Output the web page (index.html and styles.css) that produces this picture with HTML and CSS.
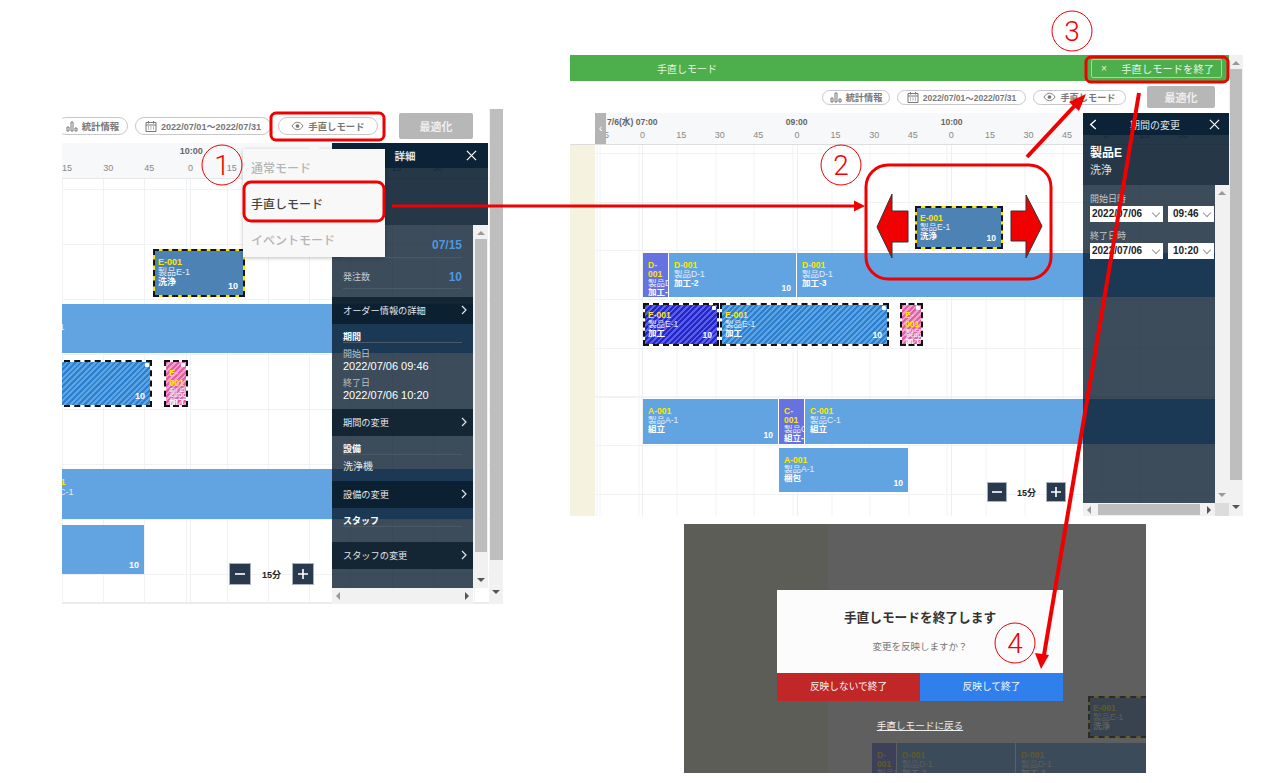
FILE: index.html
```html
<!DOCTYPE html>
<html lang="ja">
  <head>
    <meta charset="UTF-8" />
    <meta name="viewport" content="width=device-width, initial-scale=1.0" />
    <title>手直しモード</title>
    <link rel="stylesheet" href="styles.css">
  </head>
  <body>
    <svg class="sprite" aria-hidden="true">
      <symbol id="i-stats" viewBox="0 0 12 12"><path d="M1 7h2v4H1zM5 2h2v9H5zM9 8h2v3H9z" fill="none" stroke="currentColor" /></symbol>
      <symbol id="i-cal" viewBox="0 0 12 12"><path d="M1 2.5h10v9H1zM1 5h10M3.5 1v2.500M8.500 1v2.500M3 7h1M5.500 7h1M8 7h1M3 9h1M5.500 9h1M8 9h1" fill="none" stroke="currentColor" /></symbol>
      <symbol id="i-eye" viewBox="0 0 14 10"><path d="M1 5c2-3 4-4 6-4s4 1 6 4c-2 3-4 4-6 4S3 8 1 5z" fill="none" stroke="currentColor" /><circle cx="7" cy="5" r="2" fill="currentColor" /></symbol>
      <symbol id="i-close" viewBox="0 0 12 12"><path d="M1 1l10 10M11 1L1 11" fill="none" stroke="currentColor" stroke-width="1.300" /></symbol>
      <symbol id="i-next" viewBox="0 0 6 10"><path d="M1 1l4 4-4 4" fill="none" stroke="currentColor" stroke-width="1.200" /></symbol>
      <symbol id="i-back" viewBox="0 0 8 12"><path d="M7 1L1.500 6 7 11" fill="none" stroke="currentColor" stroke-width="1.500" /></symbol>
      <symbol id="i-minus" viewBox="0 0 12 12"><path d="M1 6h10" fill="none" stroke="currentColor" stroke-width="1.600" /></symbol>
      <symbol id="i-plus" viewBox="0 0 12 12"><path d="M1 6h10M6 1v10" fill="none" stroke="currentColor" stroke-width="1.600" /></symbol>
    </svg>

    <div class="slide">
      <!-- left shot: choosing the mode -->
      <section class="shot shot-a">
        <div class="shot-main">
          <div class="toolbar">
            <span class="pill pill-stat"><svg class="icon"><use href="#i-stats" /></svg>統計情報</span>
            <span class="pill pill-date"><svg class="icon"><use href="#i-cal" /></svg>2022/07/01～2022/07/31</span>
            <span class="pill pill-mode"><svg class="icon icon-eye"><use href="#i-eye" /></svg>手直しモード</span>
            <span class="optimize">最適化</span>
          </div>
          <div class="chart">
            <div class="chart-head">
              <div class="hours"><span>10:00</span></div>
              <div class="ticks">
                <span>15</span><span>30</span><span>45</span><span>0</span><span>15</span><span>30</span><span>45</span><span>0</span><span>15</span><span>30</span>
              </div>
            </div>
            <div class="chart-body">
              <div class="hour-line" style="left:128px"></div>
              <div class="bar bar-moved" style="left:91px;top:70px;width:92px;height:48px">
                <b class="code">E-001</b><span class="name">製品E-1</span><b class="proc">洗浄</b><b class="qty">10</b>
              </div>
              <div class="bar" style="left:-35px;top:125px;width:446px;height:49px">
                <b class="code">D-001</b><span class="name">製品D-1</span>
              </div>
              <div class="bar bar-hatch" style="left:-80px;top:181px;width:170px;height:47px"><b class="qty">10</b></div>
              <div class="bar bar-hatch bar-pink" style="left:102px;top:181px;width:24px;height:47px">
                <b class="code">E-001</b><span class="name">製品</span><b class="proc">加工</b>
              </div>
              <div class="bar" style="left:-26px;top:290px;width:437px;height:50px">
                <b class="code">C-001</b><span class="name">製品C-1</span>
              </div>
              <div class="bar" style="left:-80px;top:346px;width:162px;height:49px"><b class="qty">10</b></div>
            </div>
            <div class="zoomer">
              <span class="zoom-btn"><svg class="icon"><use href="#i-minus" /></svg></span>
              <b class="zoom-label">15分</b>
              <span class="zoom-btn"><svg class="icon"><use href="#i-plus" /></svg></span>
            </div>
            <aside class="panel">
              <div class="panel-head"><span></span><span class="panel-title">詳細</span><svg class="panel-x"><use href="#i-close" /></svg></div>
              <div class="summary"></div>
              <div class="panel-body">
                <div class="panel-content">
                  <div class="info info-first"><span>納期</span><b>07/15</b></div>
                  <div class="info"><span>発注数</span><b>10</b></div>
                  <div class="nav-row">オーダー情報の詳細<svg class="nav-arrow"><use href="#i-next" /></svg></div>
                  <h3 class="group">期間</h3>
                  <p class="label">開始日</p>
                  <p class="value">2022/07/06 09:46</p>
                  <p class="label label-next">終了日</p>
                  <p class="value">2022/07/06 10:20</p>
                  <div class="nav-row nav-row-spaced">期間の変更<svg class="nav-arrow"><use href="#i-next" /></svg></div>
                  <h3 class="group">設備</h3>
                  <p class="plain">洗浄機</p>
                  <div class="nav-row">設備の変更<svg class="nav-arrow"><use href="#i-next" /></svg></div>
                  <h3 class="group">スタッフ</h3>
                  <div class="blank"></div>
                  <div class="nav-row">スタッフの変更<svg class="nav-arrow"><use href="#i-next" /></svg></div>
                </div>
                <div class="inner-scroll">
                  <i class="tri tri-up"></i><i class="inner-thumb"></i><i class="tri tri-down"></i>
                </div>
              </div>
              <div class="hscroll"><i class="tri tri-left"></i><i class="tri tri-right"></i></div>
            </aside>
          </div>
        </div>
        <div class="outer-scroll"><i class="outer-thumb"></i><i class="tri tri-down"></i></div>

        <div class="mode-menu">
          <span class="mode-item">通常モード</span>
          <span class="mode-item mode-active">手直しモード</span>
          <span class="mode-item">イベントモード</span>
        </div>
      </section>

      <!-- right shot: repair mode is on -->
      <section class="shot shot-b">
        <div class="shot-main">
          <header class="mode-bar">
            <span class="mode-bar-title">手直しモード</span>
            <span class="exit-btn"><span>×</span><span>手直しモードを終了</span></span>
          </header>
          <div class="toolbar">
            <span class="pill pill-stat"><svg class="icon"><use href="#i-stats" /></svg>統計情報</span>
            <span class="pill pill-date"><svg class="icon"><use href="#i-cal" /></svg>2022/07/01～2022/07/31</span>
            <span class="pill pill-mode"><svg class="icon icon-eye"><use href="#i-eye" /></svg>手直しモード</span>
            <span class="optimize">最適化</span>
          </div>
          <div class="chart">
            <div class="chart-head">
              <span class="collapse">‹</span>
              <div class="hours"><span>7/6(水) 07:00</span><span>09:00</span><span>10:00</span></div>
              <div class="ticks">
                <span>45</span><span>0</span><span>15</span><span>30</span><span>45</span><span>0</span><span>15</span><span>30</span><span>45</span><span>0</span><span>15</span><span>30</span><span>45</span><span>0</span><span>15</span><span>30</span>
              </div>
            </div>
            <div class="chart-body">
              <div class="hour-line" style="left:72px"></div>
              <div class="hour-line" style="left:227px"></div>
              <div class="hour-line" style="left:381px"></div>
              <div class="bar bar-moved" style="left:345px;top:61px;width:88px;height:43px">
                <b class="code">E-001</b><span class="name">製品E-1</span><b class="proc">洗浄</b><b class="qty">10</b>
              </div>
              <div class="bar bar-violet" style="left:73px;top:108px;width:25px;height:44px">
                <b class="code">D-001</b><span class="name">製品D-1</span><b class="proc">加工-1</b>
              </div>
              <div class="bar" style="left:99px;top:108px;width:127px;height:44px">
                <b class="code">D-001</b><span class="name">製品D-1</span><b class="proc">加工-2</b><b class="qty">10</b>
              </div>
              <div class="bar" style="left:227px;top:108px;width:418px;height:44px">
                <b class="code">D-001</b><span class="name">製品D-1</span><b class="proc">加工-3</b>
              </div>
              <div class="bar bar-hatch bar-navy" style="left:73px;top:158px;width:76px;height:43px">
                <b class="code">E-001</b><span class="name">製品E-1</span><b class="proc">加工</b><b class="qty">10</b>
              </div>
              <div class="bar bar-hatch" style="left:150px;top:158px;width:169px;height:43px">
                <b class="code">E-001</b><span class="name">製品E-1</span><b class="proc">加工</b><b class="qty">10</b>
              </div>
              <div class="bar bar-hatch bar-pink" style="left:330px;top:158px;width:23px;height:43px">
                <b class="code">E-001</b><span class="name">製品E-1</span><b class="proc">加工</b>
              </div>
              <div class="bar" style="left:73px;top:254px;width:135px;height:45px">
                <b class="code">A-001</b><span class="name">製品A-1</span><b class="proc">組立</b><b class="qty">10</b>
              </div>
              <div class="bar bar-violet" style="left:209px;top:254px;width:25px;height:45px">
                <b class="code">C-001</b><span class="name">製品C-1</span><b class="proc">組立-1</b>
              </div>
              <div class="bar" style="left:235px;top:254px;width:410px;height:45px">
                <b class="code">C-001</b><span class="name">製品C-1</span><b class="proc">組立</b>
              </div>
              <div class="bar" style="left:209px;top:303px;width:129px;height:44px">
                <b class="code">A-001</b><span class="name">製品A-1</span><b class="proc">梱包</b><b class="qty">10</b>
              </div>
            </div>
            <div class="zoomer">
              <span class="zoom-btn"><svg class="icon"><use href="#i-minus" /></svg></span>
              <b class="zoom-label">15分</b>
              <span class="zoom-btn"><svg class="icon"><use href="#i-plus" /></svg></span>
            </div>
            <aside class="panel">
              <div class="panel-head">
                <svg class="panel-back"><use href="#i-back" /></svg>
                <span class="panel-title">期間の変更</span>
                <svg class="panel-x"><use href="#i-close" /></svg>
              </div>
              <div class="summary">
                <b class="summary-name">製品E</b>
                <span class="summary-proc">洗浄</span>
              </div>
              <div class="panel-body">
                <div class="panel-content">
                  <p class="field-label">開始日時</p>
                  <div class="field-row">
                    <span class="pick pick-date">2022/07/06</span>
                    <span class="pick pick-time">09:46</span>
                  </div>
                  <p class="field-label">終了日時</p>
                  <div class="field-row">
                    <span class="pick pick-date">2022/07/06</span>
                    <span class="pick pick-time">10:20</span>
                  </div>
                </div>
                <div class="inner-scroll">
                  <i class="tri tri-up"></i><i class="tri tri-down"></i>
                </div>
              </div>
              <div class="hscroll"><i class="tri tri-left"></i><i class="hscroll-thumb"></i><i class="tri tri-right"></i></div>
            </aside>
          </div>
        </div>
        <div class="outer-scroll"><i class="tri tri-up"></i><i class="outer-thumb"></i><i class="tri tri-down"></i></div>
      </section>

      <!-- bottom shot: exit dialog -->
      <section class="shot shot-c">
        <div class="chart-body">
          <div class="bar bar-moved" style="left:404px;top:172px;width:80px;height:42px">
            <b class="code">E-001</b><span class="name">製品E-1</span><b class="proc">洗浄</b>
          </div>
          <div class="bar bar-violet" style="left:188px;top:219px;width:24px;height:44px">
            <b class="code">D-001</b><span class="name">製品D-1</span>
          </div>
          <div class="bar" style="left:213px;top:219px;width:118px;height:44px">
            <b class="code">D-001</b><span class="name">製品D-1</span><b class="proc">加工-2</b><b class="qty">10</b>
          </div>
          <div class="bar" style="left:332px;top:219px;width:140px;height:44px">
            <b class="code">D-001</b><span class="name">製品D-1</span><b class="proc">加工-3</b>
          </div>
        </div>
        <div class="overlay">
          <div class="dialog">
            <div class="dialog-text">
              <h2>手直しモードを終了します</h2>
              <p>変更を反映しますか？</p>
            </div>
            <div class="dialog-actions">
              <span class="btn-discard">反映しないで終了</span>
              <span class="btn-apply">反映して終了</span>
            </div>
          </div>
          <span class="back-link">手直しモードに戻る</span>
        </div>
      </section>

      <!-- callouts drawn on top of the shots -->
      <svg class="marks" viewBox="0 0 1288 783">
        <rect class="frame" x="271" y="113" width="113" height="27" rx="5" />
        <rect class="frame" x="244" y="182" width="140" height="39" rx="7" />
        <rect class="frame" x="1086" y="57" width="142" height="25" rx="5" />
        <rect class="frame" x="866" y="165" width="185" height="114" rx="22" />

        <line class="shaft" x1="392" y1="206" x2="856" y2="206" />
        <polygon class="head" points="865,206 854,200.500 854,211.500" />
        <line class="shaft-thick" x1="1027" y1="157" x2="1080" y2="100" />
        <polygon class="head" points="1086,94 1069,102 1079,111" />
        <line class="shaft-thick" x1="1139" y1="93" x2="1044" y2="655" />
        <polygon class="head" points="1041,669 1035,653 1049,655" />

        <polygon class="block" points="877,227 892,194 892,211 908,211 908,242 892,242 892,258" />
        <polygon class="block" points="1042,226 1026,195 1026,211 1011,211 1011,241 1026,241 1026,258" />

        <circle class="ring" cx="222" cy="165" r="20" />
        <text class="num" x="222" y="175">1</text>
        <circle class="ring" cx="841" cy="165" r="20" />
        <text class="num" x="841" y="175">2</text>
        <circle class="ring" cx="1072" cy="31" r="20" />
        <text class="num" x="1072" y="41">3</text>
        <circle class="ring" cx="1015" cy="643" r="20" />
        <text class="num" x="1015" y="653">4</text>
      </svg>
    </div>
  </body>
</html>
```

FILE: styles.css
```css
* {
  box-sizing: border-box;
}
html,
body {
  margin: 0;
  padding: 0;
  background-color: #ffffff;
}
body {
  font-family: "Liberation Sans", "Noto Sans CJK JP", sans-serif;
  color: #333333;
}
p,
h2,
h3 {
  margin: 0;
}
.sprite {
  display: none;
}
.slide {
  position: relative;
  width: 1288px;
  height: 783px;
  overflow: hidden;
}
.shot {
  position: absolute;
  display: flex;
  overflow: hidden;
  background-color: #ffffff;
}
.shot-a {
  left: 62px;
  top: 109px;
  width: 441px;
  height: 495px;
  --cw: 41.2px;
  --rh: 55px;
}
.shot-b {
  left: 570px;
  top: 55px;
  width: 673px;
  height: 461px;
  --cw: 38.6px;
  --rh: 48.7px;
}
.shot-c {
  left: 684px;
  top: 524px;
  width: 462px;
  height: 249px;
  --cw: 38.6px;
  --rh: 48.7px;
}
.shot-main {
  flex: 1;
  min-width: 0;
  display: flex;
  flex-direction: column;
}

/* toolbar */
.toolbar {
  flex: none;
  display: flex;
  justify-content: flex-end;
  align-items: center;
  gap: 7px;
  height: 34px;
  padding-right: 16px;
}
.shot-b .toolbar {
  height: 32px;
  padding-right: 14px;
}
.pill {
  flex: none;
  display: flex;
  align-items: center;
  justify-content: center;
  gap: 4px;
  height: 18px;
  border: 1px solid #c8c8c8;
  border-radius: 9px;
  background-color: #ffffff;
  color: #777777;
  font-size: 9.400px;
  font-weight: bold;
  white-space: nowrap;
}
.shot-b .pill {
  height: 15px;
  font-size: 9.200px;
}
.pill-stat {
  width: 71px;
}
.pill-date {
  width: 136px;
  font-size: 9.100px;
}
.pill-mode {
  width: 100px;
}
.shot-b .pill-stat {
  width: 68px;
}
.shot-b .pill-date {
  width: 129px;
  font-size: 8.500px;
}
.shot-b .pill-mode {
  width: 93px;
}
.icon {
  width: 12px;
  height: 12px;
  flex: none;
}
.icon-eye {
  width: 13px;
  height: 10px;
}
.optimize {
  flex: none;
  display: flex;
  align-items: center;
  justify-content: center;
  width: 74px;
  height: 26px;
  margin-left: 14px;
  border-radius: 2px;
  background-color: #b7b7b7;
  color: #eeeeee;
  font-size: 11px;
  font-weight: bold;
}
.shot-b .optimize {
  width: 68px;
  height: 22px;
  margin-left: 14px;
}

/* chart */
.chart {
  position: relative;
  flex: 1;
  min-height: 0;
  display: flex;
  flex-direction: column;
}
.chart-head {
  position: relative;
  flex: none;
  height: 36px;
  padding-top: 3px;
  overflow: hidden;
  background-color: #f7f8f9;
  border-bottom: 1px solid #e6e7e9;
  white-space: nowrap;
}
.shot-b .chart-head {
  height: 32px;
  padding-top: 4px;
  background: linear-gradient(to right, #ffffff 25px, #f7f8f9 25px);
  border-bottom-color: #dddddd;
}
.hours {
  display: flex;
  height: 11px;
  line-height: 11px;
  padding-left: 88px;
  color: #666666;
  font-size: 9px;
  font-weight: bold;
}
.hours span {
  width: 82.400px;
  text-align: center;
}
.shot-b .hours {
  padding-left: 37px;
  font-size: 8.600px;
}
.shot-b .hours span {
  width: auto;
}
.shot-b .hours span:nth-child(2) {
  margin-left: 128px;
}
.shot-b .hours span:nth-child(3) {
  margin-left: 133px;
}
.ticks {
  display: flex;
  height: 11px;
  line-height: 11px;
  margin-top: 6px;
  margin-left: -15.600px;
  color: #888888;
  font-size: 9px;
}
.ticks span {
  flex: none;
  width: var(--cw);
  text-align: center;
}
.shot-b .ticks {
  margin-top: 2px;
  margin-left: 14.700px;
}
.collapse {
  position: absolute;
  left: 25px;
  top: 0;
  bottom: 0;
  width: 11px;
  background-color: #b4b4b4;
  color: #ffffff;
  font-size: 11px;
  line-height: 30px;
  text-align: center;
}
.chart-body {
  position: relative;
  flex: 1;
  min-height: 0;
  overflow: hidden;
  background-color: #ffffff;
  background-image: repeating-linear-gradient(to right, #f1f2f4 0 1px, transparent 1px var(--cw)),
    repeating-linear-gradient(to bottom, #f1f2f4 0 1px, transparent 1px var(--rh));
  background-position: 0 10px;
  border-bottom: 2px solid #ececec;
}
.shot-b .chart-body {
  border-bottom: none;
  background-image: linear-gradient(to right, #f5f3e0 25px, transparent 25px),
    repeating-linear-gradient(to right, #f1f2f4 0 1px, transparent 1px var(--cw)),
    repeating-linear-gradient(to bottom, #f1f2f4 0 1px, transparent 1px var(--rh));
  background-position: 0 0, 29.500px 0, 0 8px;
}
.shot-c .chart-body {
  flex: 1;
  height: 100%;
  border-bottom: none;
  background-image: linear-gradient(to right, #f5f3e0 144px, transparent 144px);
  background-position: 0 0;
}
.hour-line {
  position: absolute;
  top: 0;
  bottom: 0;
  width: 1px;
  background-color: #eeeff1;
}

/* gantt bars */
.bar {
  position: absolute;
  display: flex;
  flex-direction: column;
  padding: 8px 3px 0 5px;
  overflow: hidden;
  background-color: #62a4e2;
  color: #ffffff;
  font-size: 9px;
  line-height: 10px;
}
.shot-b .bar,
.shot-c .bar {
  font-size: 8.500px;
  line-height: 9px;
}
.code {
  color: #ffe600;
}
.name {
  flex: none;
  color: #e3eef9;
  white-space: nowrap;
}
.proc {
  flex: none;
  white-space: nowrap;
}
.qty {
  position: absolute;
  right: 5px;
  bottom: 4px;
}
.bar-violet {
  background-color: #6672e0;
}
.bar.bar-moved,
.bar.bar-hatch {
  padding-top: 6px;
  padding-left: 3px;
  border-width: 2px;
  border-style: dashed;
}
.bar-moved {
  border-color: #151515;
  background: linear-gradient(#4d82b5, #4d82b5) padding-box, linear-gradient(#ffe600, #ffe600) border-box;
}
.bar-hatch {
  border-color: #111111;
  background: repeating-linear-gradient(135deg, #2f7fcf 0 2px, #5ba4e6 2px 4px) padding-box,
    linear-gradient(#ffffff, #ffffff) border-box;
}
.bar-hatch::after {
  content: "";
  position: absolute;
  right: 1px;
  top: 1px;
  width: 4px;
  height: 4px;
  border-radius: 1px;
  background-color: #ffffff;
}
.bar-navy {
  background: repeating-linear-gradient(135deg, #2326c8 0 2px, #5a5ee8 2px 4px) padding-box,
    linear-gradient(#ffffff, #ffffff) border-box;
}
.bar-pink {
  background: repeating-linear-gradient(135deg, #e25fa8 0 2px, #f0a2cb 2px 4px) padding-box,
    linear-gradient(#ffffff, #ffffff) border-box;
}

/* zoom control */
.zoomer {
  position: absolute;
  left: 167px;
  top: 420px;
  display: flex;
  align-items: center;
}
.shot-b .zoomer {
  left: 417px;
  top: 369px;
}
.zoom-btn {
  display: flex;
  align-items: center;
  justify-content: center;
  width: 22px;
  height: 22px;
  border: 1px solid #a9b2bc;
  background-color: #2a3a4e;
  color: #ffffff;
}
.shot-b .zoom-btn {
  width: 20px;
  height: 20px;
}
.zoom-label {
  width: 41px;
  color: #222222;
  font-size: 9px;
  text-align: center;
}
.shot-b .zoom-label {
  width: 39px;
}

/* side panel */
.panel {
  position: absolute;
  left: 270px;
  top: 0;
  bottom: 0;
  width: 156px;
  display: flex;
  flex-direction: column;
  color: #ffffff;
  font-size: 9px;
}
.shot-b .panel {
  left: 513px;
  width: 146px;
}
.panel-head {
  flex: none;
  display: flex;
  align-items: center;
  justify-content: space-between;
  height: 25px;
  padding: 0 5px 0 0;
  background-color: #0c2236;
}
.shot-b .panel-head {
  height: 22px;
  padding: 0 9px 0 6px;
}
.panel-head > span:first-child {
  width: 0;
}
.panel-title {
  margin-left: 12px;
  font-size: 10.500px;
  font-weight: bold;
  color: #dfe4e8;
}
.shot-b .panel-title {
  margin-left: 4px;
  font-size: 10px;
  font-weight: normal;
}
.panel-x {
  width: 11px;
  height: 11px;
  margin-right: 6px;
}
.shot-b .panel-x {
  margin-right: 0;
}
.panel-back {
  width: 8px;
  height: 11px;
}
.summary {
  flex: none;
  display: flex;
  flex-direction: column;
  height: 57px;
  padding: 9px 7px 0;
  background-color: rgba(8, 28, 46, 0.88);
}
.shot-b .summary {
  height: 50px;
}
.summary-name {
  font-size: 12px;
  line-height: 18px;
}
.summary-proc {
  font-size: 11px;
  line-height: 16px;
  color: #dde3e8;
}
.panel-body {
  flex: 1;
  min-height: 0;
  display: flex;
}
.panel-content {
  flex: none;
  width: 141px;
  background-color: rgba(8, 28, 46, 0.79);
  overflow: hidden;
}
.shot-b .panel-content {
  width: 132px;
  padding-top: 9px;
}
.info {
  display: flex;
  align-items: center;
  justify-content: space-between;
  height: 31px;
  margin: 0 11px;
  padding-top: 7px;
  border-bottom: 1px solid #4b5a67;
  color: #c3cad0;
}
.info b {
  color: #4e97e0;
  font-size: 12px;
}
.info-first {
  height: 33px;
}
.info + .info {
  margin-bottom: 8px;
}
.nav-row {
  display: flex;
  align-items: center;
  justify-content: space-between;
  height: 26.500px;
  padding: 0 6px 0 11px;
  background-color: rgba(6, 22, 36, 0.72);
  font-size: 9.200px;
  color: #e2e6ea;
}
.nav-row-spaced {
  margin-top: 8px;
}
.nav-arrow {
  width: 6px;
  height: 10px;
}
.group {
  height: 19.500px;
  margin: 0 11px;
  padding-top: 8px;
  border-bottom: 1px solid #4b5a67;
  font-size: 9px;
  line-height: 11px;
}
.label {
  margin: 6px 11px 0;
  color: #b9c1c8;
  font-size: 9px;
  line-height: 11px;
}
.label-next {
  margin-top: 6px;
}
.value {
  margin: 0 11px;
  font-size: 11px;
  line-height: 12px;
}
.plain {
  height: 26px;
  margin: 0 11px;
  padding-top: 5px;
  font-size: 10px;
  line-height: 14px;
  color: #dfe4e8;
}
.blank {
  height: 15px;
}
.field-label {
  margin-left: 7px;
  color: #c3cad0;
  font-size: 9px;
  line-height: 11px;
}
.field-row {
  display: flex;
  gap: 5px;
  margin: 1px 0 9px 7px;
}
.pick {
  position: relative;
  height: 16px;
  padding-left: 2px;
  background-color: #ffffff;
  color: #222222;
  font-size: 10px;
  font-weight: bold;
  line-height: 16px;
}
.pick::after {
  content: "";
  position: absolute;
  right: 4px;
  top: 4px;
  width: 5px;
  height: 5px;
  border-right: 1px solid #999999;
  border-bottom: 1px solid #999999;
  transform: rotate(45deg);
}
.pick-date {
  width: 73px;
}
.pick-time {
  width: 46px;
  padding-left: 5px;
}

/* scrollbars */
.tri {
  display: block;
  flex: none;
  width: 0;
  height: 0;
  border: 4px solid transparent;
}
.tri-up {
  border-top: none;
  border-bottom: 4px solid #999999;
}
.tri-down {
  border-bottom: none;
  border-top: 4px solid #555555;
}
.tri-left {
  border-left: none;
  border-right: 4px solid #999999;
}
.tri-right {
  border-right: none;
  border-left: 4px solid #555555;
}
.inner-scroll {
  flex: none;
  width: 15px;
  display: flex;
  flex-direction: column;
  align-items: center;
  padding: 6px 0;
  background-color: #f1f1f1;
}
.shot-b .inner-scroll {
  width: 14px;
  justify-content: space-between;
}
.shot-b .inner-scroll .tri-down {
  border-top-color: #999999;
}
.inner-thumb {
  display: block;
  width: 12px;
  flex: 1;
  margin: 4px 0 26px;
  background-color: #bdbdbd;
}
.hscroll {
  flex: none;
  display: flex;
  align-items: center;
  justify-content: space-between;
  width: 141px;
  height: 16px;
  padding: 0 4px;
  background-color: #f1f1f1;
}
.shot-b .hscroll {
  position: relative;
  width: 146px;
  height: 13px;
  padding: 0 18px 0 4px;
  background: linear-gradient(to right, #f1f1f1 132px, #dcdcdc 132px);
}
.hscroll-thumb {
  display: block;
  width: 102px;
  height: 11px;
  background-color: #bebebe;
}
.outer-scroll {
  flex: none;
  width: 14px;
  display: flex;
  flex-direction: column;
  align-items: center;
  padding-bottom: 6px;
  background-color: #f1f1f1;
}
.outer-thumb {
  display: block;
  width: 13px;
  height: 451px;
  margin-bottom: 30px;
  background-color: #bebebe;
}
.shot-b .outer-scroll {
  padding-top: 6px;
}
.shot-b .outer-thumb {
  width: 12px;
  height: 411px;
  margin: 4px 0 25px;
}

/* mode dropdown */
.mode-menu {
  position: absolute;
  left: 181px;
  top: 40px;
  width: 142px;
  height: 108px;
  display: flex;
  flex-direction: column;
  background-color: #f8f8f8;
  box-shadow: 0 1px 4px rgba(0, 0, 0, 0.25);
}
.mode-menu::before {
  content: "";
  position: absolute;
  left: 67px;
  top: -4px;
  width: 8px;
  height: 8px;
  background-color: #f8f8f8;
  transform: rotate(45deg);
}
.mode-item {
  flex: 1;
  display: flex;
  align-items: center;
  padding-left: 8px;
  color: #b5b5b5;
  font-size: 12px;
  font-weight: 500;
}
.mode-active {
  color: #444444;
}

/* repair mode bar */
.mode-bar {
  flex: none;
  display: flex;
  align-items: center;
  justify-content: space-between;
  height: 26px;
  padding: 0 7px 0 87px;
  background-color: #4caf4c;
  color: #e6f4e6;
  font-size: 10px;
}
.exit-btn {
  display: flex;
  align-items: center;
  justify-content: space-between;
  width: 131px;
  height: 19px;
  padding: 0 7px 0 9px;
  border: 1px solid #a6d8a6;
  border-radius: 2px;
  font-size: 10.300px;
}

/* exit dialog */
.overlay {
  position: absolute;
  inset: 0;
  display: flex;
  flex-direction: column;
  align-items: center;
  padding: 66px 0 0 10px;
  background-color: rgba(50, 50, 50, 0.78);
}
.dialog {
  width: 286px;
  background-color: #fcfcfc;
}
.dialog-text {
  height: 83px;
  padding-top: 19px;
  text-align: center;
}
.dialog-text h2 {
  color: #333333;
  font-size: 12.700px;
  font-weight: bold;
  line-height: 18px;
}
.dialog-text p {
  margin-top: 13px;
  color: #777777;
  font-size: 9.500px;
  line-height: 14px;
}
.dialog-actions {
  display: flex;
  height: 28px;
  color: #f4f4f4;
  font-size: 9.700px;
  line-height: 28px;
  text-align: center;
}
.btn-discard {
  flex: 1;
  background-color: #c22727;
}
.btn-apply {
  flex: 1;
  background-color: #2f80ed;
}
.back-link {
  margin-top: 18px;
  color: #eeeeee;
  font-size: 9.600px;
  line-height: 14px;
  text-decoration: underline;
}

/* callouts */
.marks {
  position: absolute;
  left: 0;
  top: 0;
  width: 1288px;
  height: 783px;
  pointer-events: none;
}
.frame {
  fill: none;
  stroke: #f00000;
  stroke-width: 3;
}
.shaft {
  stroke: #f00000;
  stroke-width: 3;
}
.shaft-thick {
  stroke: #f00000;
  stroke-width: 4;
}
.head {
  fill: #f00000;
}
.block {
  fill: #f00000;
  stroke: #333333;
  stroke-width: 1;
}
.ring {
  fill: none;
  stroke: #f00000;
  stroke-width: 1;
}
.num {
  fill: #f00000;
  font-family: "Roboto", sans-serif;
  font-size: 28px;
  font-weight: 300;
  text-anchor: middle;
}
```
